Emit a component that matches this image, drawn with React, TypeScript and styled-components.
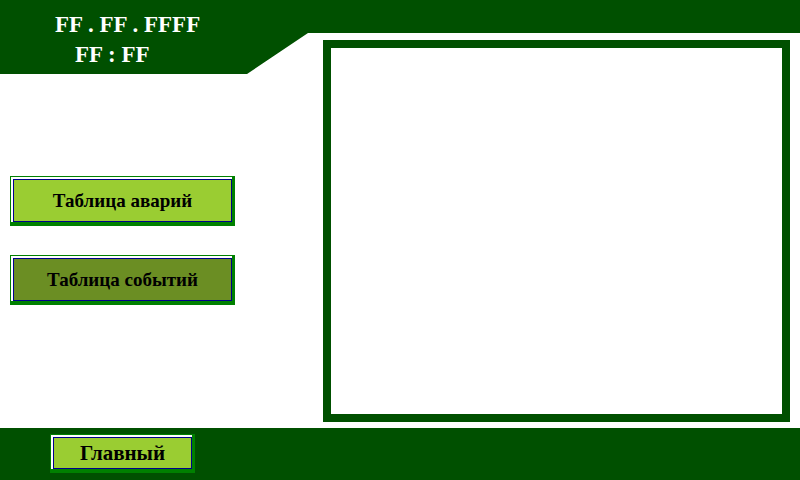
import React from 'react';
import styled, { createGlobalStyle } from 'styled-components';

const GREEN_DARK = '#005000';
const GREEN = '#008000';
const SERIF = "'Liberation Serif', 'Times New Roman', 'DejaVu Serif', serif";

const GlobalStyle = createGlobalStyle`
  html, body {
    margin: 0;
    padding: 0;
    background: #ffffff;
    overflow: hidden;
  }
`;

const Screen = styled.div`
  width: 800px;
  height: 480px;
  display: flex;
  flex-direction: column;
  background: #ffffff;
  font-family: ${SERIF};
`;

const Body = styled.div`
  flex: 1;
  display: flex;
  flex-direction: row;
`;

const LeftColumn = styled.div`
  width: 323px;
  display: flex;
  flex-direction: column;
`;

const Cap = styled.div`
  height: 74px;
  box-sizing: border-box;
  padding: 10px 0 0 55px;
  background: ${GREEN_DARK};
  clip-path: polygon(0 0, 100% 0, 100% 33px, 308px 33px, 247px 74px, 0 74px);
  color: #ffffff;
  font-weight: bold;
  font-size: 23px;
  line-height: 30px;
`;

const ClockLine = styled.div<{ $indent?: number }>`
  padding-left: ${(p) => p.$indent || 0}px;
  white-space: pre;
`;

const ButtonStack = styled.div`
  display: flex;
  flex-direction: column;
  gap: 29px;
  padding: 102px 0 0 10px;
`;

const PanelButton = styled.button<{ $w: number; $h: number }>`
  display: flex;
  box-sizing: border-box;
  width: ${(p) => p.$w}px;
  height: ${(p) => p.$h}px;
  padding: 0;
  margin: 0;
  border-style: solid;
  border-color: ${GREEN};
  border-width: 1px 3px 4px 1px;
  background: ${GREEN};
  font-family: ${SERIF};
  cursor: pointer;
`;

const Face = styled.span`
  flex: 1;
  display: flex;
  border-top: 2px solid #ffffff;
  border-left: 2px solid #ffffff;
`;

const Label = styled.span<{ $fill: string; $size: number }>`
  flex: 1;
  display: flex;
  align-items: center;
  justify-content: center;
  border: 1px solid #00008b;
  background: ${(p) => p.$fill};
  color: #000000;
  font-family: ${SERIF};
  font-weight: bold;
  font-size: ${(p) => p.$size}px;
`;

const RightColumn = styled.div`
  flex: 1;
  display: flex;
  flex-direction: column;
`;

const TopBar = styled.div`
  height: 33px;
  background: ${GREEN_DARK};
`;

const Frame = styled.div`
  margin: 7px 10px 6px 0;
  flex: 1;
  border: 8px solid ${GREEN_DARK};
  background: #ffffff;
`;

const Footer = styled.div`
  height: 52px;
  box-sizing: border-box;
  padding: 6px 0 0 50px;
  background: ${GREEN_DARK};
`;

type BtnProps = {
  text: string;
  fill: string;
  w: number;
  h: number;
  size: number;
};

const HmiButton = ({ text, fill, w, h, size }: BtnProps): JSX.Element => (
  <PanelButton $w={w} $h={h}>
    <Face>
      <Label $fill={fill} $size={size}>
        {text}
      </Label>
    </Face>
  </PanelButton>
);

const App = (): JSX.Element => {
  return (
    <>
      <GlobalStyle />
      <Screen>
        <Body>
          <LeftColumn>
            <Cap>
              <ClockLine>FF . FF . FFFF</ClockLine>
              <ClockLine $indent={20}>FF : FF</ClockLine>
            </Cap>
            <ButtonStack>
              <HmiButton text='Таблица аварий' fill='#9acd32' w={225} h={50} size={19} />
              <HmiButton text='Таблица событий' fill='#6b8e23' w={225} h={50} size={19} />
            </ButtonStack>
          </LeftColumn>
          <RightColumn>
            <TopBar />
            <Frame />
          </RightColumn>
        </Body>
        <Footer>
          <HmiButton text='Главный' fill='#9acd32' w={145} h={39} size={21} />
        </Footer>
      </Screen>
    </>
  );
};

export default App;
